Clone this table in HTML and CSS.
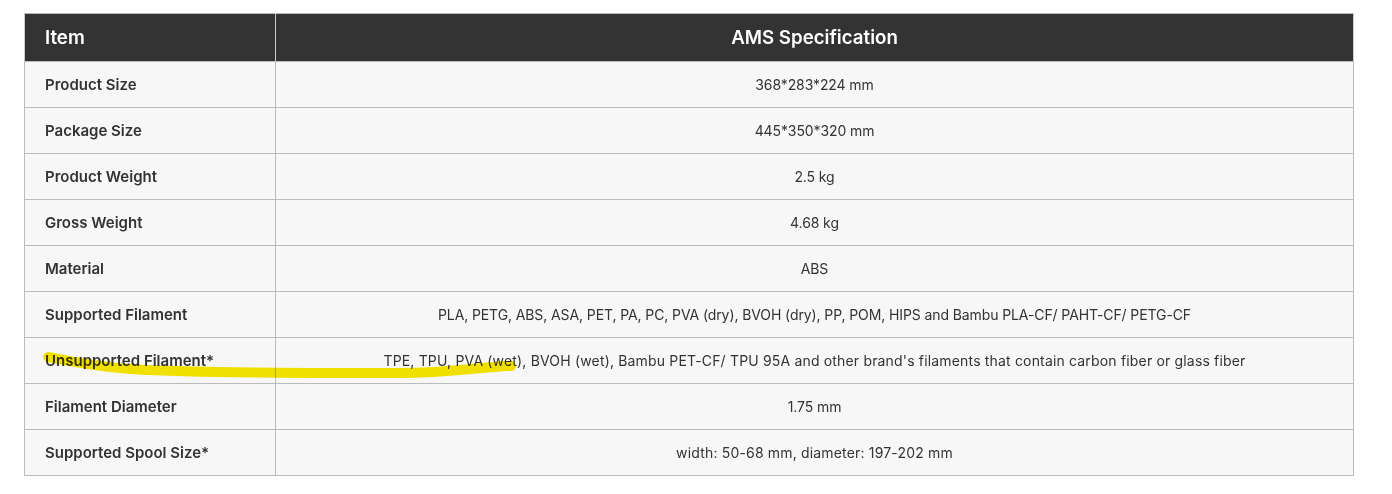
FILE: index.html
```html
<!DOCTYPE html>
<html>
<head>
<meta charset="UTF-8">
<title>AMS Specification</title>
<link rel="stylesheet" href="styles.css">
</head>
<body>
<div class="page">
<table class="spec">
  <thead>
    <tr><th class="item">Item</th><th>AMS Specification</th></tr>
  </thead>
  <tbody>
    <tr><td class="item">Product Size</td><td>368*283*224 mm</td></tr>
    <tr><td class="item">Package Size</td><td>445*350*320 mm</td></tr>
    <tr><td class="item">Product Weight</td><td>2.5 kg</td></tr>
    <tr><td class="item">Gross Weight</td><td>4.68 kg</td></tr>
    <tr><td class="item">Material</td><td>ABS</td></tr>
    <tr><td class="item">Supported Filament</td><td>PLA, PETG, ABS, ASA, PET, PA, PC, PVA (dry), BVOH (dry), PP, POM, HIPS and Bambu PLA-CF/ PAHT-CF/ PETG-CF</td></tr>
    <tr><td class="item">Unsupported Filament*</td><td class="loose">TPE, TPU, PVA (wet), BVOH (wet), Bambu PET-CF/ TPU 95A and other brand's filaments that contain carbon fiber or glass fiber</td></tr>
    <tr><td class="item">Filament Diameter</td><td>1.75 mm</td></tr>
    <tr><td class="item">Supported Spool Size*</td><td class="loose">width: 50-68 mm, diameter: 197-202 mm</td></tr>
  </tbody>
</table>
<!-- hand drawn marker stroke -->
<svg class="marker" width="1392" height="494" viewBox="0 0 1392 494">
  <path d="M48 357 C70 361 90 366 130 369 C200 373 300 373 400 373 C450 373 480 367 511 366" fill="none" stroke="#f8e800" stroke-width="10" stroke-linecap="round"/>
</svg>
</div>
</body>
</html>
```

FILE: styles.css
```css
* {
  margin: 0;
  padding: 0;
}

body {
  background: #fff;
  font-family: Inter, "Noto Sans", sans-serif;
  color: #333;
}

.page {
  position: relative;
  padding: 13px 38px 0 24px;
}

.spec {
  width: 100%;
  border-collapse: collapse;
  border: 1px solid #bbb;
}

.spec th,
.spec td {
  border: 1px solid #bbb;
  text-align: center;
}

.spec th {
  height: 47px;
  background: #333;
  color: #fff;
  font-size: 18.7px;
  font-weight: 600;
  border-color: #bbb #ccc;
}

.spec td {
  height: 45px;
  background: #f7f7f7;
  font-size: 14px;
  font-weight: 400;
  letter-spacing: -0.1px;
}

.spec td.loose {
  letter-spacing: 0.17px;
}

.spec .item {
  width: 230px;
  padding-left: 20px;
  text-align: left;
}

.spec td.item {
  font-size: 15px;
  font-weight: 600;
  letter-spacing: 0;
}

.marker {
  position: absolute;
  top: 0;
  left: 0;
  mix-blend-mode: multiply;
  pointer-events: none;
}
```
